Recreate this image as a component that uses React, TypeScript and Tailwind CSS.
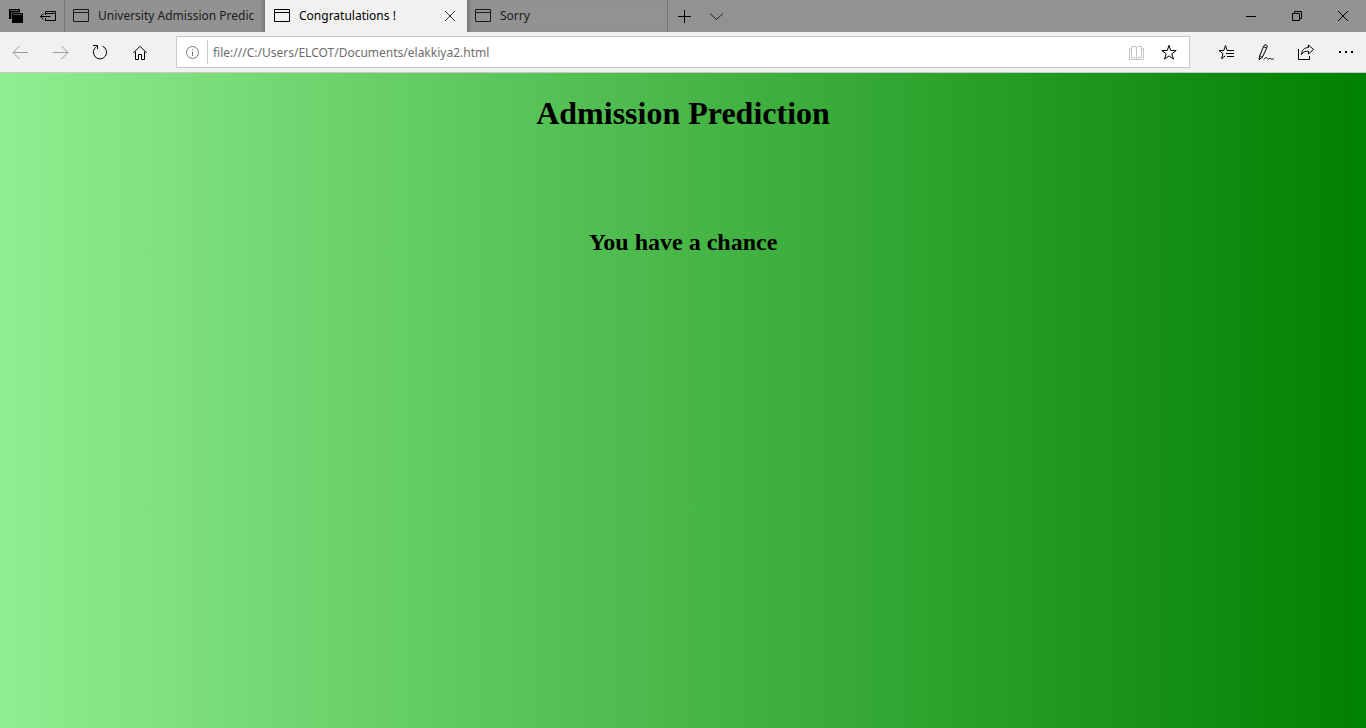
import type { ReactNode } from "react";

function Icon({ children, size = 20, className = "" }: { children: ReactNode; size?: number; className?: string }) {
  return (
    <svg width={size} height={size} viewBox={`0 0 ${size} ${size}`} fill="none" stroke="currentColor" className={`shrink-0 ${className}`} aria-hidden="true">
      {children}
    </svg>
  );
}

function IconButton({ label, className, children }: { label: string; className: string; children: ReactNode }) {
  return (
    <button type="button" aria-label={label} className={`flex shrink-0 items-center justify-center ${className}`}>
      {children}
    </button>
  );
}

function PageIcon() {
  return (
    <svg width="16" height="14" viewBox="0 0 16 14" fill="none" stroke="currentColor" className="shrink-0" aria-hidden="true">
      <path d="M.5 .5h15v12H.5zM.5 3.5h15" />
    </svg>
  );
}

function Cross() {
  return (
    <Icon>
      <path d="M5 5l10 10M15 5L5 15" />
    </Icon>
  );
}

function Tab({ title, active = false, className = "" }: { title: string; active?: boolean; className?: string }) {
  return (
    <div className={`flex shrink-0 items-center ${active ? "bg-[#f1f1f1] pl-[9px] text-black" : "pl-2 text-[#1c1c1c]"} ${className}`}>
      <button type="button" role="tab" aria-selected={active} className="flex min-w-0 grow items-center gap-[9px] text-left">
        <PageIcon />
        <span className="overflow-hidden whitespace-nowrap">{title}</span>
      </button>
      {active && (
        <IconButton label="Close tab" className="h-8 w-[34px] text-[#333]">
          <Cross />
        </IconButton>
      )}
    </div>
  );
}

function TabStrip() {
  return (
    <div className="flex h-8 bg-[#929292] text-[12px] leading-4 text-black">
      <IconButton label="Tabs you've set aside" className="h-8 w-8">
        <Icon>
          <path d="M3 3h11v10H3zM6 7h11v10H6z" fill="currentColor" stroke="none" />
          <path d="M4 4.500h9M5.500 13V6.500H14M7 8.500h9" stroke="#929292" strokeOpacity=".55" />
        </Icon>
      </IconButton>
      <IconButton label="Set these tabs aside" className="h-8 w-8">
        <Icon>
          <path d="M7.500 9V5.500h10v9h-10V12M7.500 7.500h10M2.500 10.500h10M5.500 7.500l-3 3 3 3" />
        </Icon>
      </IconButton>
      <div role="tablist" className="flex">
        <Tab title="University Admission Predic" className="w-[201px] border-l border-[#747474] shadow-[inset_-4px_0_4px_-3px_#666]" />
        <Tab title="Congratulations !" active className="w-[202px]" />
        <Tab title="Sorry" className="w-[201px] border-r border-[#747474] shadow-[inset_4px_0_4px_-3px_#666]" />
      </div>
      <IconButton label="New tab" className="h-8 w-8">
        <Icon>
          <path d="M4 10.500h13M10.500 4v13" />
        </Icon>
      </IconButton>
      <IconButton label="Show tab previews" className="h-8 w-8 text-[#222]">
        <Icon>
          <path d="M4 7.500l6.500 6 6.500-6" />
        </Icon>
      </IconButton>
      <div className="ml-auto flex">
        <IconButton label="Minimize" className="h-8 w-[46px]">
          <Icon>
            <path d="M5 10.500h10" />
          </Icon>
        </IconButton>
        <IconButton label="Restore" className="h-8 w-[46px]">
          <Icon>
            <path d="M5.500 7.500h7v7h-7zM7.500 7V5.500h7v7H13" />
          </Icon>
        </IconButton>
        <IconButton label="Close" className="h-8 w-[46px]">
          <Cross />
        </IconButton>
      </div>
    </div>
  );
}

function Toolbar() {
  return (
    <div className="flex h-[41px] border-b border-[#c8c8c8] bg-[#f1f1f1] text-black">
      <IconButton label="Back" className="h-10 w-10 text-[#999]">
        <Icon>
          <path d="M3.500 10.500H18M9.500 4l-6.500 6.500 6.500 6.500" />
        </Icon>
      </IconButton>
      <IconButton label="Forward" className="h-10 w-10 text-[#999]">
        <Icon>
          <path d="M3 10.500h14.500M11.500 4l6.500 6.500-6.500 6.500" />
        </Icon>
      </IconButton>
      <IconButton label="Refresh" className="h-10 w-10">
        <Icon>
          <path d="M12.500 4.200A6.600 6.600 0 1 1 6.500 4.700M3 3.500h4.500V7" />
        </Icon>
      </IconButton>
      <IconButton label="Home" className="h-10 w-10">
        <Icon>
          <path d="M3.300 11L10 4.300 16.700 11M5.500 9.500v8h3v-5h3v5h3v-8" />
        </Icon>
      </IconButton>
      <div className="mt-1 ml-4 flex h-8 min-w-0 grow items-center border border-[#c8c8c8] bg-white">
        <IconButton label="Site information" className="h-7 w-[30px] text-[#777]">
          <Icon>
            <circle cx="10.500" cy="10.500" r="6" />
            <path d="M10.500 9.500V14M10.500 7v1" />
          </Icon>
        </IconButton>
        <input
          type="text"
          aria-label="Address"
          defaultValue="file:///C:/Users/ELCOT/Documents/elakkiya2.html"
          className="h-6 min-w-0 grow border-l border-[#c8c8c8] bg-transparent pl-[5px] text-[12px] leading-4 text-[#6d6d6d] outline-none"
        />
        <IconButton label="Reading view" className="h-7 w-8 text-[#c4c4c4]">
          <Icon>
            <path d="M9.500 5.500v10M4.500 4.500h3.500l1.500 1 1.500-1h3.500v11H11l-1.500 1-1.500-1H4.500zM4 6.500H2.500v11h14v-11H15" />
          </Icon>
        </IconButton>
        <IconButton label="Add to favorites" className="mr-1 h-7 w-8">
          <Icon>
            <path d="M10 3.300l1.700 5.200h5.500l-4.400 3.300 1.700 5.300-4.500-3.200-4.500 3.200 1.700-5.300-4.400-3.300h5.500z" />
          </Icon>
        </IconButton>
      </div>
      <div className="ml-4 flex">
        <IconButton label="Favorites" className="h-10 w-10">
          <Icon>
            <path d="M12.500 8.500h-1.300L9.500 3.500 7.800 8.500H3l4 3.200-1.500 5 3.800-2.800M11 8.500h7M10 11.500h8M11 14.500h7" />
          </Icon>
        </IconButton>
        <IconButton label="Add notes" className="h-10 w-10">
          <Icon>
            <path d="M3 17.500l.8-4L7.800 3.800Q9 2 10.400 3T10.700 6.200L6.200 15.500zM3.800 13.500l2.400 2M7.500 4.500l2.900 1.600M8 17.500c1.500-2.500 2.700-2.300 3.700-.8 .8 1.200 1.600-.6 2.500-.4s1 1.900 3.500.4" />
          </Icon>
        </IconButton>
        <IconButton label="Share" className="h-10 w-10">
          <Icon>
            <path d="M2.500 7v10.500h11V14M12.500 3L17.500 7.500l-5 4.500v-2.700c-3.500-.3-5.500.7-7 3.200.2-4 2.500-6.800 7-7z" />
          </Icon>
        </IconButton>
        <IconButton label="Settings and more" className="h-10 w-10">
          <Icon>
            <path d="M3 9h2v2H3zM9 9h2v2H9zM15 9h2v2h-2z" fill="currentColor" stroke="none" />
          </Icon>
        </IconButton>
      </div>
    </div>
  );
}

export default function App() {
  return (
    <div className="flex min-h-screen flex-col font-['Noto_Sans','Open_Sans',sans-serif]">
      <header>
        <TabStrip />
        <Toolbar />
      </header>
      <main className="grow bg-linear-to-r/srgb from-[#90ee90] to-[#008000] px-2 pt-[22px] text-center font-['Liberation_Serif',serif] font-bold text-black">
        <h1 className="text-[32px] leading-9">Admission Prediction</h1>
        <h2 className="mt-24 text-[24px] leading-[30px]">You have a chance</h2>
      </main>
    </div>
  );
}
